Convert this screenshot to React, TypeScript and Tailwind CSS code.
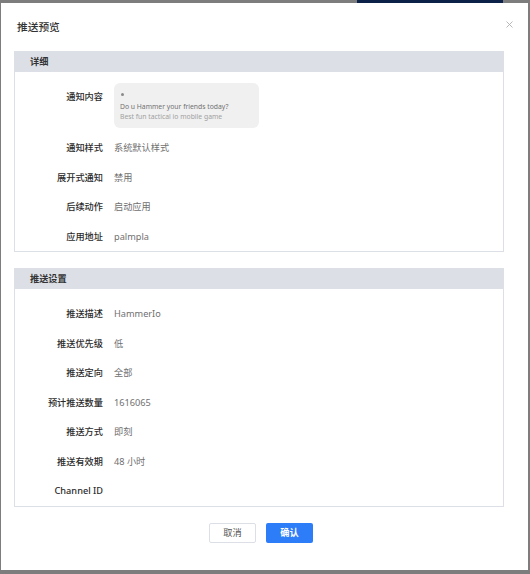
import React from 'react';

interface Field {
    label: string;
    value?: string;
}

const detailFields: Field[] = [
    { label: '通知样式', value: '系统默认样式' },
    { label: '展开式通知', value: '禁用' },
    { label: '后续动作', value: '启动应用' },
    { label: '应用地址', value: 'palmpla' },
];

const pushFields: Field[] = [
    { label: '推送描述', value: 'HammerIo' },
    { label: '推送优先级', value: '低' },
    { label: '推送定向', value: '全部' },
    { label: '预计推送数量', value: '1616065' },
    { label: '推送方式', value: '即刻' },
    { label: '推送有效期', value: '48 小时' },
    { label: 'Channel ID' },
];

const FieldRow: React.FC<Field> = ({ label, value }) => (
    <div className="flex h-[29.5px] items-center">
        <div className="w-[88px] text-right font-medium text-[#2b2b2b]">{label}</div>
        <div className="ml-[11px] text-[#707070]">{value}</div>
    </div>
);

const Section: React.FC<{ title: string; children: React.ReactNode }> = ({ title, children }) => (
    <div className="border border-[#dcdfe6]">
        <div className="flex h-[20px] items-center bg-[#dcdfe6] pl-[15px] font-semibold text-[#333]">
            {title}
        </div>
        {children}
    </div>
);

export default function App() {
    return (
        <div
            className="h-[574px] w-[530px] overflow-hidden bg-[#7d7d7d] text-[9.2px] leading-none"
            style={{ fontFamily: '"Noto Sans", "Noto Sans CJK SC", sans-serif' }}
        >
            {/* backdrop strip */}
            <div className="flex h-[3px]">
                <div className="ml-[357px] w-[146px] bg-[#0c2147]" />
            </div>

            {/* Modal */}
            <div className="relative ml-[1px] h-[567px] w-[527px] bg-white pl-[13px] pr-[24px]">
                <div className="flex h-[48px] items-center pl-[3px] text-[10.7px] font-medium text-[#333]">推送预览</div>
                <svg
                    className="absolute right-[15px] top-[18px]"
                    width="7"
                    height="7"
                    viewBox="0 0 7 7"
                    fill="none"
                    stroke="#b0b0b0"
                    strokeWidth="0.9"
                >
                    <path d="M0.5 0.5 L6.5 6.5 M6.5 0.5 L0.5 6.5" />
                </svg>

                <Section title="详细">
                    <div className="pt-[11px]">
                        <div className="flex h-[45px] items-start">
                            <div className="mt-[9px] w-[88px] text-right font-medium text-[#2b2b2b]">通知内容</div>
                            <div className="ml-[11px] h-[45px] w-[145px] rounded-[6px] bg-[#f0f0f0] pl-[6px] pt-[10px] text-[6.8px]">
                                <div className="ml-[1px] h-[3px] w-[3px] rounded-full bg-[#8a8a8a]" />
                                <div className="mt-[6px] leading-[10px] text-[#707070]">Do u Hammer your friends today?</div>
                                <div className="leading-[10px] text-[#a0a0a0]">Best fun tactical io mobile game</div>
                            </div>
                        </div>
                        <div className="mt-[5px]">
                            {detailFields.map((f) => (
                                <FieldRow key={f.label} {...f} />
                            ))}
                        </div>
                    </div>
                </Section>

                <div className="mt-[16px]">
                    <Section title="推送设置">
                        <div className="pt-[10px]">
                            {pushFields.map((f) => (
                                <FieldRow key={f.label} {...f} />
                            ))}
                        </div>
                    </Section>
                </div>

                {/* Footer buttons */}
                <div className="mt-[16px] flex gap-[10px] pl-[195px]">
                    <button className="h-[20px] w-[47px] rounded-[2px] border border-[#dcdfe6] bg-white text-[#555]">
                        取消
                    </button>
                    <button className="h-[20px] w-[47px] rounded-[2px] bg-[#2e7df8] font-semibold text-white">
                        确认
                    </button>
                </div>
            </div>
        </div>
    );
}
